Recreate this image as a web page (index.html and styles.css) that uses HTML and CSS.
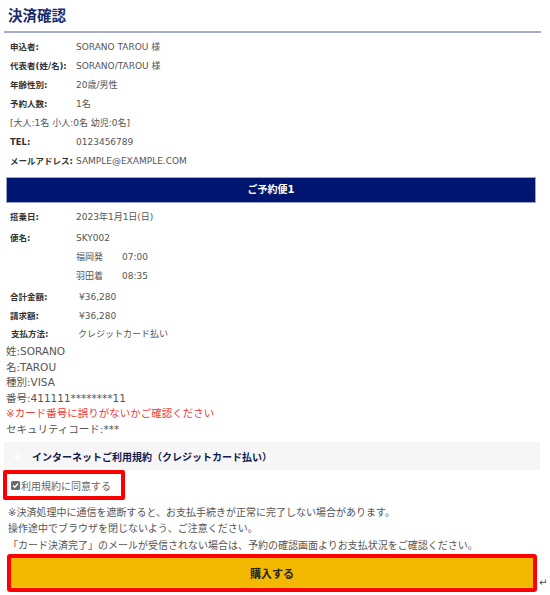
FILE: index.html
```html
<!DOCTYPE html>
<html lang="ja">
<head>
<meta charset="utf-8">
<title>決済確認</title>
<link rel="stylesheet" href="styles.css">
</head>
<body>
<div class="page">
  <h1 class="title">決済確認</h1>
  <div class="rule"></div>

  <dl class="info">
    <div class="row"><dt>申込者:</dt><dd>SORANO TAROU 様</dd></div>
    <div class="row"><dt>代表者(姓/名):</dt><dd>SORANO/TAROU 様</dd></div>
    <div class="row"><dt>年齢性別:</dt><dd>20歳/男性</dd></div>
    <div class="row"><dt>予約人数:</dt><dd>1名</dd></div>
    <div class="row full"><dd>[大人:1名 小人:0名 幼児:0名]</dd></div>
    <div class="row"><dt>TEL:</dt><dd>0123456789</dd></div>
    <div class="row"><dt>メールアドレス:</dt><dd>SAMPLE@EXAMPLE.COM</dd></div>
  </dl>

  <div class="bar">ご予約便1</div>

  <dl class="info flight">
    <div class="row"><dt>搭乗日:</dt><dd>2023年1月1日(日)</dd></div>
    <div class="row gap"><dt>便名:</dt><dd>SKY002</dd></div>
    <div class="row"><dt></dt><dd><span class="port">福岡発</span>07:00</dd></div>
    <div class="row"><dt></dt><dd><span class="port">羽田着</span>08:35</dd></div>
    <div class="row gap price"><dt>合計金額:</dt><dd>¥36,280</dd></div>
    <div class="row price"><dt>請求額:</dt><dd>¥36,280</dd></div>
    <div class="row pay"><dt>支払方法:</dt><dd>クレジットカード払い</dd></div>
  </dl>

  <div class="card">
    <p>姓:SORANO</p>
    <p>名:TAROU</p>
    <p>種別:VISA</p>
    <p>番号:411111********11</p>
    <p class="warn">※カード番号に誤りがないかご確認ください</p>
    <p>セキュリティコード:***</p>
  </div>

  <div class="terms"><span class="plus">+</span><span class="terms-text">インターネットご利用規約（クレジットカード払い）</span></div>

  <label class="agree">
    <svg class="check" width="9" height="9" viewBox="0 0 9 9"><rect x="0" y="0" width="9" height="9" rx="1.5" fill="#6b6b6b"/><path d="M2 4.6 L3.8 6.3 L7 2.6" stroke="#fff" stroke-width="1.4" fill="none"/></svg>
    <span>利用規約に同意する</span>
  </label>

  <div class="notes">
    <p>※決済処理中に通信を遮断すると、お支払手続きが正常に完了しない場合があります。</p>
    <p>操作途中でブラウザを閉じないよう、ご注意ください。</p>
    <p>「カード決済完了」のメールが受信されない場合は、予約の確認画面よりお支払状況をご確認ください。</p>
  </div>

  <div class="buy-row">
    <div class="buy-frame"><button class="buy" type="button">購入する</button></div>
    <span class="ret">↵</span>
  </div>
</div>
</body>
</html>
```

FILE: styles.css
```css
html, body {
  margin: 0;
  padding: 0;
  background: #fff;
}
body {
  font-family: "DejaVu Sans", "Noto Sans CJK JP", sans-serif;
  color: #555;
}
.page {
  width: 550px;
}
.title {
  margin: 0;
  height: 31px;
  padding-left: 8px;
  box-sizing: border-box;
  font-family: "Noto Sans CJK JP", sans-serif;
  font-size: 14.5px;
  line-height: 30px;
  font-weight: bold;
  color: #1b2a6b;
}
.rule {
  margin-left: 4px;
  width: 537px;
  height: 2px;
  background: #a6acd0;
}
.info {
  margin: 4.5px 0 0 10px;
  padding: 0;
  font-size: 9px;
}
.row {
  display: grid;
  grid-template-columns: 66px auto;
  height: 19px;
  line-height: 19px;
}
.row dt {
  font-weight: bold;
  font-size: 8.5px;
  color: #333;
  white-space: nowrap;
}
.row dd {
  margin: 0;
  color: #555;
}
.row.full {
  grid-template-columns: auto;
}
.bar {
  margin: 6.5px 0 0 6px;
  width: 530px;
  height: 26px;
  box-sizing: border-box;
  border: 1px solid #9aa3cf;
  background: #001570;
  color: #fff;
  font-size: 10px;
  font-weight: bold;
  line-height: 24px;
  text-align: center;
}
.flight {
  margin-top: 4.5px;
}
.row.gap {
  margin-top: 2px;
}
.port {
  display: inline-block;
  width: 46px;
}
.row.price dd {
  padding-left: 3px;
}
.row.pay {
  margin-top: -1px;
}
.row.pay dt {
  padding-left: 1px;
}
.row.pay dd {
  padding-left: 2px;
}
.card {
  margin: 0.5px 0 0 6px;
  font-size: 10.5px;
  line-height: 15.5px;
  color: #555;
}
.card p {
  margin: 0;
}
.card .warn {
  color: #f43a3a;
}
.terms {
  margin: 5px 0 0 4px;
  width: 536px;
  height: 28px;
  background: #f6f6f6;
  display: flex;
  align-items: center;
  padding-left: 8px;
  box-sizing: border-box;
  gap: 9px;
}
.plus {
  color: #fff;
  font-size: 13px;
  font-weight: bold;
  line-height: 1;
}
.terms-text {
  color: #0f1b4d;
  font-size: 10px;
  font-weight: bold;
}
.agree {
  margin-left: 3px;
  width: 122px;
  height: 30px;
  box-sizing: border-box;
  border: 4px solid #f00;
  border-radius: 2px;
  display: flex;
  align-items: center;
  padding-left: 4px;
  gap: 1px;
  font-size: 10px;
  color: #666;
}
.check {
  flex: none;
}
.notes {
  margin: 4.75px 0 0 8px;
  font-size: 10px;
  line-height: 16.5px;
  color: #555;
}
.notes p {
  margin: 0;
}
.buy-row {
  display: flex;
  align-items: flex-end;
}
.buy-frame {
  margin-left: 7px;
  width: 530px;
  height: 38px;
  box-sizing: border-box;
  border: 4px solid #f00;
  border-radius: 3px;
  display: flex;
}
.buy {
  flex: 1;
  margin: 0;
  border: 0;
  border-bottom: 1px solid #bfbfbf;
  background: #f2b900;
  font-family: inherit;
  font-size: 11px;
  font-weight: bold;
  color: #222;
  padding: 0;
}
.ret {
  font-size: 10px;
  color: #444;
  line-height: 12px;
  margin: 0 0 3px 2px;
}
```
